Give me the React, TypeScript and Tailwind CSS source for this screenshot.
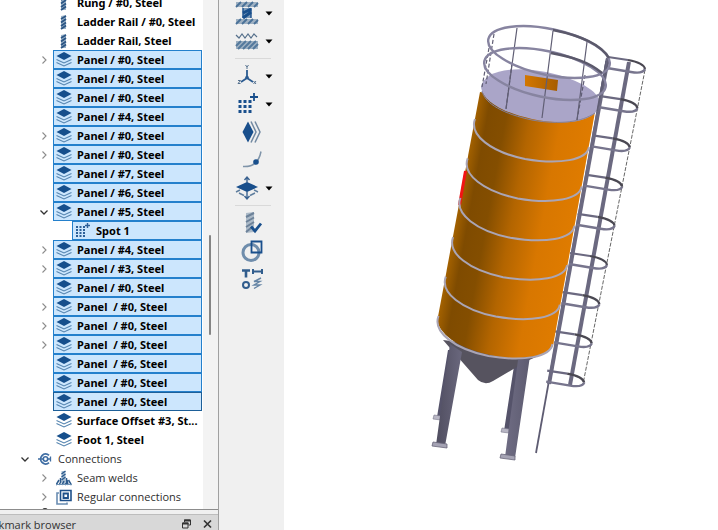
import type { ReactNode } from "react";
import clsx from "clsx";

type IconName = "bar" | "panel" | "spot" | "connections" | "seam" | "regular" | "node";

type Row = {
  label: string;
  icon: IconName;
  depth: 0 | 1 | 2;
  arrow?: "open" | "closed";
  selected?: boolean;
  focused?: boolean;
  bold?: boolean;
};

const panel = (label: string, arrow?: "open" | "closed", focused?: boolean): Row => ({
  label,
  icon: "panel",
  depth: 1,
  arrow,
  selected: true,
  focused,
  bold: true,
});

const ROWS: Row[] = [
  { label: "Rung / #0, Steel", icon: "bar", depth: 1, bold: true },
  { label: "Ladder Rail / #0, Steel", icon: "bar", depth: 1, bold: true },
  { label: "Ladder Rail, Steel", icon: "bar", depth: 1, bold: true },
  panel("Panel / #0, Steel", "closed"),
  panel("Panel / #0, Steel"),
  panel("Panel / #0, Steel"),
  panel("Panel / #4, Steel"),
  panel("Panel / #0, Steel", "closed"),
  panel("Panel / #0, Steel", "closed"),
  panel("Panel / #7, Steel"),
  panel("Panel / #6, Steel"),
  panel("Panel / #5, Steel", "open"),
  { label: "Spot 1", icon: "spot", depth: 2, selected: true, bold: true },
  panel("Panel / #4, Steel", "closed"),
  panel("Panel / #3, Steel", "closed"),
  panel("Panel / #0, Steel"),
  panel("Panel  / #0, Steel", "closed"),
  panel("Panel  / #0, Steel", "closed"),
  panel("Panel  / #0, Steel", "closed"),
  panel("Panel  / #6, Steel"),
  panel("Panel  / #0, Steel"),
  panel("Panel  / #0, Steel", undefined, true),
  { label: "Surface Offset #3, St...", icon: "panel", depth: 1, bold: true },
  { label: "Foot 1, Steel", icon: "panel", depth: 1, bold: true },
  { label: "Connections", icon: "connections", depth: 0, arrow: "open" },
  { label: "Seam welds", icon: "seam", depth: 1, arrow: "closed" },
  { label: "Regular connections", icon: "regular", depth: 1, arrow: "closed" },
  { label: "", icon: "node", depth: 0 },
];

const INDENT = ["pl-[15px]", "pl-[34px]", "pl-[53px]"];

function TreeIcon({ name }: { name: IconName }) {
  return (
    <svg viewBox="0 0 16 16" className="size-4 shrink-0" fill="none" aria-hidden="true">
      {name === "bar" && (
        <>
          <path d="M5 2l5-1v14l-5 0z" fill="#9db4c9" />
          <path d="M5 5l5-3M5 8.500l5-3.500M5 12l5-3.500M5 15l5-3.500" stroke="#2b5585" strokeWidth="1.800" />
        </>
      )}
      {name === "panel" && (
        <>
          <path d="M.5 10.500l7.500 3.500 7.500-3.500M.5 7.500l7.500 3.500 7.500-3.500" stroke="#5585b0" strokeWidth="1.100" />
          <path d="M8 0l7.500 4-7.500 4-7.500-4z" fill="#164f8c" />
        </>
      )}
      {name === "spot" && (
        <>
          {[4, 7, 10, 13].map((y) => (
            <path key={y} d={`M1 ${y}h9`} stroke="#2d6098" strokeWidth="2" strokeDasharray="2 1.500" />
          ))}
          <path d="M12.500 0v5M10 2.500h5" stroke="#2d5f98" strokeWidth="1.400" />
        </>
      )}
      {name === "connections" && (
        <>
          <path d="M1 8h5M10 8h4" stroke="#3f6da3" strokeWidth="1.600" />
          <path d="M12 4.300a5 5 0 1 0 0 7.400" stroke="#3f6da3" strokeWidth="1.800" />
          <circle cx="8.500" cy="8" r="2.200" stroke="#3f6da3" strokeWidth="1.600" />
          <path d="M13.500 5.500v5" stroke="#3f6da3" strokeWidth="1.300" />
        </>
      )}
      {name === "seam" && (
        <>
          <path d="M5.500 1h4v14h-4z" fill="#a9bfd3" />
          <path d="M5.500 4l4-3M5.500 7l4-3M5.500 10l4-3" stroke="#2c5a8c" strokeWidth="1.400" />
          <path d="M4.500 8v4M10.500 8v4" stroke="#2c5a8c" strokeWidth="1.500" />
          <path d="M0 15l3-5M3 15l2-3.500M6 15l2-4M9 15l2-3M12 15l-1-5M15.500 15l-3-5" stroke="#2c5a8c" strokeWidth="1.500" />
          <path d="M0 14.500h16" stroke="#6f93b6" />
        </>
      )}
      {name === "regular" && (
        <>
          <path d="M11 13.500v1.500h-10v-11h2" stroke="#6a8db2" strokeWidth="1.600" />
          <path d="M4.500 1.500h10.500v10h-10.500z" stroke="#1f508a" strokeWidth="1.600" />
          <path d="M7.500 4.500h4.500v4.500h-4.500z" stroke="#1f508a" strokeWidth="1.800" />
        </>
      )}
      {name === "node" && <circle cx="8" cy="3" r="3" fill="#333" />}
    </svg>
  );
}

function Arrow({ state }: { state: "open" | "closed" }) {
  return (
    <svg viewBox="0 0 10 10" className="size-2.5" fill="none" aria-hidden="true">
      {state === "open" ? (
        <path d="M1.500 3.500l3.500 3.500 3.500-3.500" stroke="#333" strokeWidth="1.300" />
      ) : (
        <path d="M3.500 1.500l3.500 3.500-3.500 3.500" stroke="#8c8c8c" strokeWidth="1.100" />
      )}
    </svg>
  );
}

function TreeRow({ row }: { row: Row }) {
  return (
    <li
      role="treeitem"
      aria-selected={!!row.selected}
      className={clsx("flex h-[19px] shrink-0", INDENT[row.depth])}
    >
      <span className="flex w-[19px] shrink-0 items-center justify-center">
        {row.arrow && <Arrow state={row.arrow} />}
      </span>
      <div
        className={clsx(
          "flex min-w-0 flex-1 items-center gap-[5px] border pl-0.5 whitespace-pre",
          row.selected ? "bg-[#cce6fd]" : "border-transparent",
          row.selected && (row.focused ? "border-[#1d5f98]" : "border-[#2480cc]"),
          row.bold ? "font-bold text-black" : "font-['Open_Sans','Noto_Sans',sans-serif] text-[#2e2e2e]",
        )}
      >
        <TreeIcon name={row.icon} />
        <span>{row.label}</span>
      </div>
    </li>
  );
}

function Tool({ label, menu, children }: { label: string; menu?: boolean; children: ReactNode }) {
  return (
    <button type="button" aria-label={label} className="flex h-6 items-center gap-1.5">
      <svg viewBox="0 0 24 24" className="size-6 overflow-visible" fill="none" aria-hidden="true">
        {children}
      </svg>
      {menu && (
        <svg viewBox="0 0 8 5" className="h-[5px] w-2" aria-hidden="true">
          <path d="M.5 .5h7l-3.500 4z" fill="#000" />
        </svg>
      )}
    </button>
  );
}

function Separator() {
  return <div className="my-px h-px w-9 bg-[#d9d9d9]" />;
}

function Toolbar() {
  return (
    <div role="toolbar" className="flex w-[65px] shrink-0 flex-col gap-1 bg-[#f0f0f0] pt-px pl-4">
      <Tool label="Beam" menu>
        <path d="M1 1h22v5H1zM1 18h22v5H1z" fill="#9fb1c2" />
        <path d="M1 6l5-5M7 6l5-5M13 6l5-5M19 6l4-4M1 23l5-5M7 23l5-5M13 23l5-5M19 23l4-4" stroke="#4a7198" strokeWidth="1.800" />
        <path d="M8 7h8v10H8z" fill="#7e9cba" />
        <path d="M8 12l8-4M8 17l8-6" stroke="#194f8c" strokeWidth="3" />
        <path d="M8 7v10M16 7v10" stroke="#194f8c" strokeWidth="1.400" />
      </Tool>
      <Tool label="Surface" menu>
        <path d="M1 6l3 3 3-4 3 4 3-4 3 4 3-4 3 3" stroke="#56708b" strokeWidth="1.200" />
        <path d="M1 12h22v8H1z" fill="#9fb1c2" />
        <path d="M1 17l5-5M3 20l8-8M8 20l8-8M13 20l8-8M18 20l5-5" stroke="#54799d" strokeWidth="2" />
      </Tool>
      <Separator />
      <Tool label="Coordinate system" menu>
        <path d="M12 6v8l-6 4M12 14l6 4" stroke="#2b5b91" strokeWidth="1.800" />
        <circle cx="12" cy="13.500" r="1.800" fill="#2b5b91" />
        <path d="M10.500 1l1.500 2 1.500-2M12 3v2M3 16.500h2.500L3 19.500h2.500M18.500 17l2.500 3M21 17l-2.500 3" stroke="#56728f" />
      </Tool>
      <Tool label="Point grid" menu>
        <path d="M3.500 9.500h13M3.500 14.500h13M3.500 19.500h13" stroke="#194f8c" strokeWidth="3" strokeDasharray="3 2" />
        <path d="M19 1v8M15 5h8" stroke="#194f8c" strokeWidth="1.800" />
      </Tool>
      <Tool label="Offset layers">
        <path d="M16 1.500l5 10.500-5 10.500M20 1.500l5 10.500-5 10.500" stroke="#7188a1" strokeWidth="1.500" />
        <path d="M13 1.500l5.500 10.500-5.500 10.500-5.500-10.500z" fill="#194f8c" />
      </Tool>
      <Tool label="Point on curve">
        <path d="M8 18.500c9 .5 16-4 18-15" stroke="#7f94a9" strokeWidth="1.500" />
        <circle cx="21" cy="14" r="2.800" fill="#194f8c" />
      </Tool>
      <Tool label="Move surface" menu>
        <path d="M1 16l4-2M19 14l4 2M4 17l5 2.500M20 17l-5 2.500" stroke="#607f9f" strokeWidth="1.400" />
        <path d="M12 6l11 5-11 5-11-5z" fill="#194f8c" />
        <path d="M12 7v-5M9.500 4l2.500-3 2.500 3M12 15v7M9.500 20l2.500 3 2.500-3" stroke="#3a6290" strokeWidth="1.400" />
      </Tool>
      <Separator />
      <Tool label="Check member">
        <path d="M11 2l8-1v20l-8 1z" fill="#acbac8" />
        <path d="M11 6l8-4M11 11l8-4.500M11 16l8-5M11 21l5-4" stroke="#6d8299" strokeWidth="2" />
        <path d="M16 15.500l4 4.500 6-7.500" stroke="#194f8c" strokeWidth="2.800" />
      </Tool>
      <Tool label="Boolean">
        <circle cx="16" cy="13.500" r="8" stroke="#6f8dac" strokeWidth="3" />
        <path d="M16.500 2.500h10v11h-10z" stroke="#194f8c" strokeWidth="1.800" />
      </Tool>
      <Tool label="Profiles">
        <path d="M7 3.500h8M11 3.500v7" stroke="#315d8d" strokeWidth="2.600" />
        <path d="M18 4.500h9M18 2v5M27 2v5" stroke="#315d8d" strokeWidth="2" />
        <circle cx="11" cy="18" r="3" stroke="#315d8d" strokeWidth="2" />
        <path d="M26 11l-7 3.500 6 0-6 3.500 6 0-6 3.500" stroke="#6685a5" strokeWidth="1.400" />
      </Tool>
    </div>
  );
}

const RING_PITCH = { x: -7.3, y: 39.4 };
const HOOP_PITCH = { x: -7.6, y: 39.2 };

function Viewport() {
  return (
    <main className="min-w-0 flex-1 bg-white">
      <svg viewBox="284 0 434 530" className="block w-full" fill="none" role="img" aria-label="Silo model">
        <defs>
          <linearGradient id="shell" gradientUnits="userSpaceOnUse" x1="456" y1="220" x2="576" y2="242">
            <stop offset="0" stopColor="#a36100" />
            <stop offset="0.100" stopColor="#7f4b00" />
            <stop offset="0.250" stopColor="#844e00" />
            <stop offset="0.450" stopColor="#b36500" />
            <stop offset="0.700" stopColor="#d87700" />
            <stop offset="1" stopColor="#e07c00" />
          </linearGradient>
          <linearGradient id="leg" x1="0" x2="1">
            <stop offset="0" stopColor="#504e60" />
            <stop offset="0.500" stopColor="#7f7c95" />
            <stop offset="1" stopColor="#5d5b70" />
          </linearGradient>
          <linearGradient id="hatch" x1="0" x2="1">
            <stop offset="0" stopColor="#d37700" />
            <stop offset="1" stopColor="#a65d00" />
          </linearGradient>
        </defs>

        {/* rear legs and hopper */}
        <path d="M448 350l-11 67h4l14-67zM514 366l-10 65h5l12-65z" fill="#55536a" />
        <path d="M434 415l7 1v4l-8-1zM502 428l7 1v4l-8-1z" fill="#b8b6c4" stroke="#777589" strokeWidth=".6" />
        <path d="M443 340l35 40q7 6 15 1l34-20 18-8z" fill="#56535f" />
        <path d="M450 344l12 8-17 94-9-1zM518 360l12-4-15 102-10-1z" fill="url(#leg)" />
        <path d="M433 442l14 2v4l-15-2zM501 454l14 2v4l-15-2z" fill="#a5a3b4" stroke="#68667a" strokeWidth=".8" />

        {/* ladder */}
        <path d="M607 58L536 453" stroke="#5e5c72" strokeWidth="1.800" />
        <path d="M608 58L549 384" stroke="#6b6980" strokeWidth="4" />
        <path d="M629 62L570 385" stroke="#6b6980" strokeWidth="4" />
        <path d="M645 70L583 384" stroke="#555" strokeWidth=".9" strokeDasharray="4 1.500" />
        {Array.from({ length: 9 }, (_, i) => (
          <g key={i} transform={`translate(${i * HOOP_PITCH.x} ${i * HOOP_PITCH.y})`}>
            <path d="M608 57l20 3" stroke="#6b6980" strokeWidth="2.200" />
            <path d="M628 60q16 3 17 9" stroke="#4a4852" strokeWidth="2.200" />
            <path d="M645 69q-2 5-14 3l-24-4" stroke="#77758d" strokeWidth="2.400" />
          </g>
        ))}

        {/* shell */}
        <path d="M480 92L437 322Q448 350 507 358Q546 359 553 346L595 112Z" fill="url(#shell)" />
        <path d="M465.500 171l-6 34" stroke="#f21414" strokeWidth="3" />
        {Array.from({ length: 6 }, (_, i) => (
          <path
            key={i}
            transform={`translate(${i * RING_PITCH.x} ${i * RING_PITCH.y})`}
            d="M475 119c-6 16 16 33 50 40c35 6 62 1 64-12"
            stroke="#aaa5b5"
            strokeWidth="2"
          />
        ))}

        {/* deck */}
        <path d="M481 87c2-14 25-20 52-17c36 4 66 20 66 31l-3 11c-10 11-35 13-64 7c-28-6-49-17-51-32z" fill="#aaa5c8" />
        <path d="M482 91c3 13 22 23 50 29c28 5 50 2 63-7" stroke="#85829b" />
        <path d="M525 75l33 5-1 11-32-5z" fill="url(#hatch)" />

        {/* guard rail */}
        <g stroke="#605e74" strokeWidth="1.200">
          <path d="M517 28l-11 81M553 31l-11 87M587 42l-10 78M609 57l-11 50M606 61l-9 50" />
          <path d="M494 34l-8 50M489 48l-7 39M512 63l-6 46M585 75l-8 45" strokeDasharray="4 2" />
        </g>
        <g strokeWidth="2.400">
          <ellipse cx="549" cy="52" rx="62" ry="23" transform="rotate(12 549 52)" stroke="#8784a0" />
          <ellipse cx="545" cy="74" rx="62" ry="23" transform="rotate(12 545 74)" stroke="#8784a0" />
          <path d="M553 30c25 5 47 13 56 28M551 53c22 4 38 9 51 20" stroke="#5b596b" />
        </g>
      </svg>
    </main>
  );
}

export default function App() {
  return (
    <div className="flex h-screen overflow-hidden bg-white font-['Noto_Sans','Open_Sans',sans-serif] text-[11px] leading-4">
      <aside className="flex w-[219px] shrink-0 flex-col border-r border-[#a0a0a0] bg-[#f0f0f0]">
        <div className="flex min-h-0 flex-1 overflow-hidden border-b border-[#8c8c8c]">
          <ul role="tree" aria-label="Model" className="-mt-[7px] flex min-w-0 flex-1 flex-col bg-white pr-px">
            {ROWS.map((row, i) => (
              <TreeRow key={i} row={row} />
            ))}
          </ul>
          <div className="w-[15px] shrink-0 bg-[#f3f3f3] pt-[235px] pl-1.5">
            <div className="h-[100px] w-0.5 rounded-full bg-[#858585]" />
          </div>
        </div>
        <div className="mt-1 flex h-4 shrink-0 items-start overflow-hidden border-t border-[#bdbdbd] bg-[#d8d8d8] pr-1.5 text-[#333]">
          <h2 className="-ml-2 flex-1 pt-0.5 font-['Open_Sans','Noto_Sans',sans-serif] whitespace-nowrap">
            okmark browser
          </h2>
          <div className="flex gap-3 pt-1">
            <button type="button" aria-label="Float">
              <svg viewBox="0 0 9 10" className="h-2.5 w-[9px]" fill="none">
                <path d="M2.500 3v-2h6v5h-2" stroke="#333" />
                <path d="M2 1.500h6.500M.5 4.500h6" stroke="#333" strokeWidth="1.800" />
                <path d="M.5 4h5.500v5h-5.500z" stroke="#333" />
              </svg>
            </button>
            <button type="button" aria-label="Close">
              <svg viewBox="0 0 9 10" className="h-2.5 w-[9px]" fill="none">
                <path d="M1 1.500l7 7M8 1.500l-7 7" stroke="#333" strokeWidth="1.700" />
              </svg>
            </button>
          </div>
        </div>
      </aside>
      <Toolbar />
      <Viewport />
    </div>
  );
}
